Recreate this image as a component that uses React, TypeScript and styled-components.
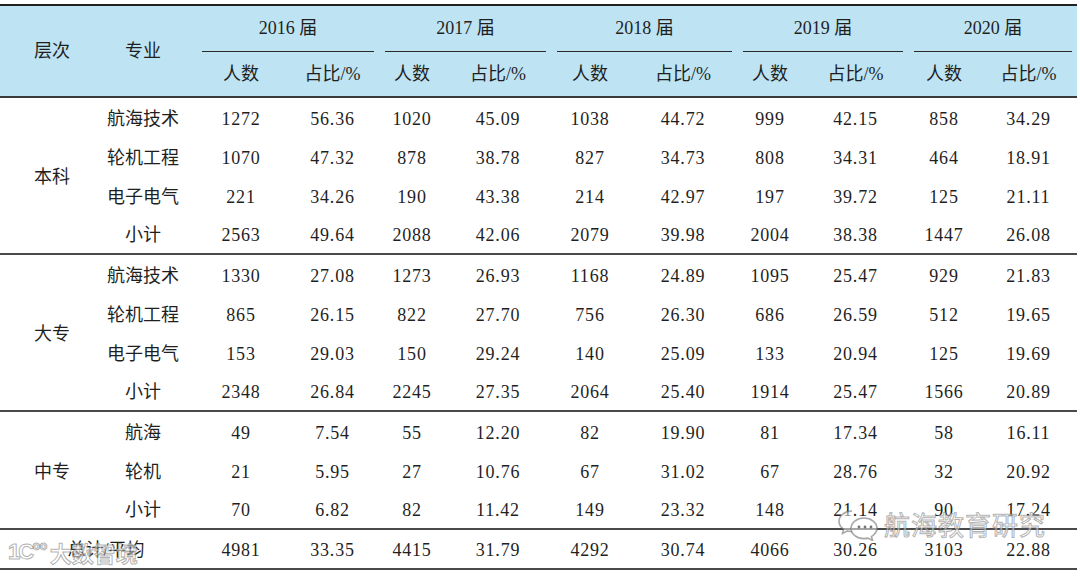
import * as React from 'react';
import styled, { createGlobalStyle } from 'styled-components';

const GlobalStyle = createGlobalStyle`
    html, body {
        margin: 0;
        padding: 0;
        background: #ffffff;
    }
    body {
        font-family: "Liberation Serif", "Noto Sans CJK SC", serif;
        color: #1f1f1f;
    }
`;

const colWidths = [104, 92, 90, 93, 66, 106, 78, 108, 66, 105, 72, 97];

type Row = { major: string; values: string[] };
type Group = { level: string; rows: Row[] };

const years = ['2016', '2017', '2018', '2019', '2020'];

const groups: Group[] = [
    {
        level: '本科',
        rows: [
            { major: '航海技术', values: ['1272', '56.36', '1020', '45.09', '1038', '44.72', '999', '42.15', '858', '34.29'] },
            { major: '轮机工程', values: ['1070', '47.32', '878', '38.78', '827', '34.73', '808', '34.31', '464', '18.91'] },
            { major: '电子电气', values: ['221', '34.26', '190', '43.38', '214', '42.97', '197', '39.72', '125', '21.11'] },
            { major: '小计', values: ['2563', '49.64', '2088', '42.06', '2079', '39.98', '2004', '38.38', '1447', '26.08'] },
        ],
    },
    {
        level: '大专',
        rows: [
            { major: '航海技术', values: ['1330', '27.08', '1273', '26.93', '1168', '24.89', '1095', '25.47', '929', '21.83'] },
            { major: '轮机工程', values: ['865', '26.15', '822', '27.70', '756', '26.30', '686', '26.59', '512', '19.65'] },
            { major: '电子电气', values: ['153', '29.03', '150', '29.24', '140', '25.09', '133', '20.94', '125', '19.69'] },
            { major: '小计', values: ['2348', '26.84', '2245', '27.35', '2064', '25.40', '1914', '25.47', '1566', '20.89'] },
        ],
    },
    {
        level: '中专',
        rows: [
            { major: '航海', values: ['49', '7.54', '55', '12.20', '82', '19.90', '81', '17.34', '58', '16.11'] },
            { major: '轮机', values: ['21', '5.95', '27', '10.76', '67', '31.02', '67', '28.76', '32', '20.92'] },
            { major: '小计', values: ['70', '6.82', '82', '11.42', '149', '23.32', '148', '21.14', '90', '17.24'] },
        ],
    },
];

const totals = ['4981', '33.35', '4415', '31.79', '4292', '30.74', '4066', '30.26', '3103', '22.88'];

const Page = styled.div`
    position: relative;
    width: 1080px;
    height: 576px;
    padding-top: 4px;
    box-sizing: border-box;
    overflow: hidden;
`;

const Table = styled.table`
    width: 1077px;
    table-layout: fixed;
    border-collapse: collapse;
    border-top: 2px solid #222;
    border-bottom: 2.5px solid #111;
    font-size: 18px;
`;

const Head = styled.thead`
    background: #bee4f4;
    border-bottom: 2px solid #3a3a3a;
`;

const HeadCell = styled.th<{ $h: number }>`
    padding: 0;
    line-height: ${(p) => p.$h}px;
    font-weight: 400;
    text-align: center;
    vertical-align: middle;
`;

const MajorHead = styled(HeadCell)`
    padding-right: 14px;
`;

const YearLabel = styled.div`
    margin: 0 5px 0 6px;
    line-height: 45px;
    border-bottom: 1.5px solid #2a2a2a;
`;

const BodyRow = styled.tr<{ $last?: boolean }>`
    border-bottom: ${(p) => (p.$last ? '2px solid #4a4a4a' : 'none')};
    & > td {
        line-height: ${(p) => (p.$last ? 35 : 36)}px;
    }
`;

const Cell = styled.td`
    padding: 3px 0 0;
    text-align: center;
    vertical-align: middle;
    white-space: nowrap;
    letter-spacing: 0.8px;
`;

const MajorCell = styled(Cell)`
    padding-right: 14px;
    letter-spacing: 0;
`;

const LevelCell = styled(Cell)`
    letter-spacing: 0;
`;

const TotalLabel = styled(Cell)`
    padding-left: 16px;
    letter-spacing: 0;
`;

const Mark = styled.div`
    position: absolute;
    display: flex;
    align-items: center;
    gap: 4px;
    pointer-events: none;
    font-family: "Noto Sans CJK SC", sans-serif;
    color: rgba(255, 255, 255, 0.55);
    -webkit-text-stroke: 1px rgba(110, 110, 110, 0.55);
    white-space: nowrap;
`;

const WechatMark = styled(Mark)`
    left: 836px;
    top: 505px;
    font-size: 26px;
    letter-spacing: 1px;
`;

const BrandMark = styled(Mark)`
    left: 8px;
    top: 536px;
    font-size: 22px;
    font-weight: 700;
`;

const BrandNum = styled.span`
    font-family: "Liberation Sans", sans-serif;
    font-size: 22px;
    letter-spacing: -2px;
`;

function WechatIcon() {
    return (
        <svg width="44" height="34" viewBox="0 0 44 34" fill="none" stroke="rgba(110,110,110,0.6)" strokeWidth="1.6">
            <path d="M16 4c-7.2 0-13 4.6-13 10.3 0 3.2 1.8 6 4.6 7.9L6.5 26.5l5-2.6c1.4.4 2.9.6 4.5.6" fill="rgba(255,255,255,0.5)" />
            <path d="M28 11c-7.2 0-13 4.6-13 10.3S20.8 31.6 28 31.6c1.4 0 2.7-.2 4-.5l4.6 2.4-1.2-3.9c3.1-1.9 5.6-4.9 5.6-8.3C41 15.6 35.2 11 28 11z" fill="rgba(255,255,255,0.5)" />
            <circle cx="23" cy="20" r="1.4" fill="rgba(60,60,60,0.7)" stroke="none" />
            <circle cx="29" cy="20" r="1.4" fill="rgba(60,60,60,0.7)" stroke="none" />
            <circle cx="35" cy="20" r="1.4" fill="rgba(60,60,60,0.7)" stroke="none" />
        </svg>
    );
}

function App() {
    return (
        <Page>
            <GlobalStyle />
            <Table>
                <colgroup>
                    {colWidths.map((w, i) => (
                        <col key={i} style={{ width: w }} />
                    ))}
                </colgroup>
                <Head>
                    <tr>
                        <HeadCell $h={46} rowSpan={2}>层次</HeadCell>
                        <MajorHead $h={46} rowSpan={2}>专业</MajorHead>
                        {years.map((y) => (
                            <HeadCell key={y} $h={46} colSpan={2}>
                                <YearLabel>{y} 届</YearLabel>
                            </HeadCell>
                        ))}
                    </tr>
                    <tr>
                        {years.map((y) => (
                            <React.Fragment key={y}>
                                <HeadCell $h={44}>人数</HeadCell>
                                <HeadCell $h={44}>占比/%</HeadCell>
                            </React.Fragment>
                        ))}
                    </tr>
                </Head>
                <tbody>
                    {groups.map((g) =>
                        g.rows.map((r, i) => (
                            <BodyRow key={g.level + r.major} $last={i === g.rows.length - 1}>
                                {i === 0 && <LevelCell rowSpan={g.rows.length}>{g.level}</LevelCell>}
                                <MajorCell>{r.major}</MajorCell>
                                {r.values.map((v, j) => (
                                    <Cell key={j}>{v}</Cell>
                                ))}
                            </BodyRow>
                        )),
                    )}
                    <BodyRow $last>
                        <TotalLabel colSpan={2}>总计/平均</TotalLabel>
                        {totals.map((v, j) => (
                            <Cell key={j}>{v}</Cell>
                        ))}
                    </BodyRow>
                </tbody>
            </Table>
            <WechatMark>
                <WechatIcon />
                航海教育研究
            </WechatMark>
            <BrandMark>
                <BrandNum>1C°°</BrandNum>
                大数智境
            </BrandMark>
        </Page>
    );
}

export default App;
